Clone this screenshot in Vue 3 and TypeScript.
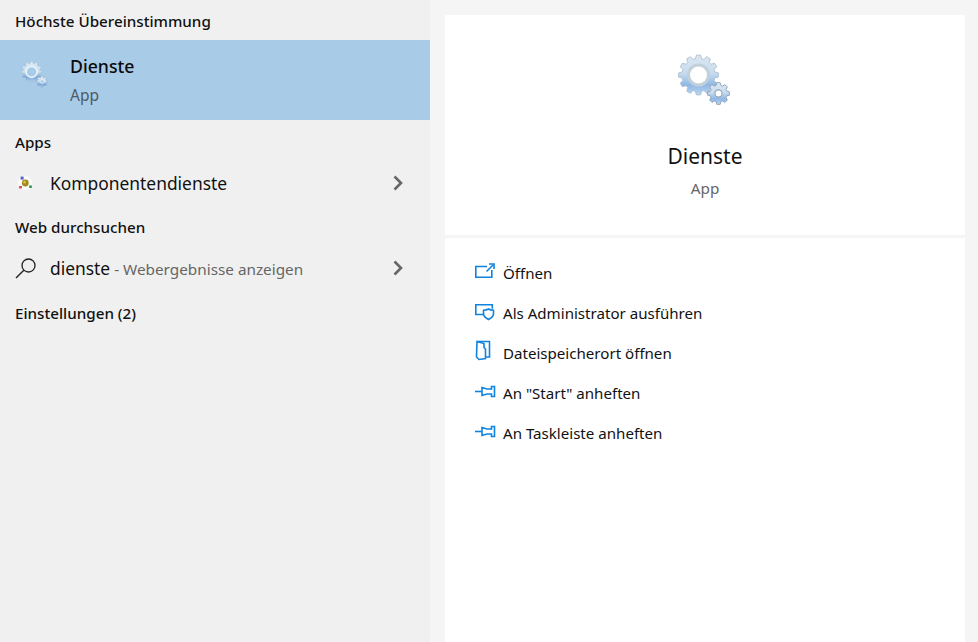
<script setup lang="ts">
function gearPath(cx: number, cy: number, outer: number, root: number, teeth: number): string {
  const pts: string[] = []
  const step = (Math.PI * 2) / teeth
  for (let i = 0; i < teeth; i++) {
    const a = i * step - Math.PI / 2
    const seq: [number, number][] = [
      [root, a - step * 0.36],
      [outer, a - step * 0.2],
      [outer, a + step * 0.2],
      [root, a + step * 0.36],
    ]
    for (const [r, t] of seq) {
      pts.push(`${(cx + r * Math.cos(t)).toFixed(2)} ${(cy + r * Math.sin(t)).toFixed(2)}`)
    }
  }
  return 'M' + pts.join('L') + 'Z'
}

const bigGear = gearPath(20.5, 21, 20, 16.5, 12)
const smallGear = gearPath(40.5, 39.5, 11, 8.5, 8)

const actions = [
  { label: 'Öffnen', icon: 'open' },
  { label: 'Als Administrator ausführen', icon: 'admin' },
  { label: 'Dateispeicherort öffnen', icon: 'folder' },
  { label: 'An "Start" anheften', icon: 'pin' },
  { label: 'An Taskleiste anheften', icon: 'pin' },
]
</script>

<template>
  <div class="page">
    <aside class="results">
      <h2 class="heading first">Höchste Übereinstimmung</h2>
      <div class="best">
        <svg class="best-icon" viewBox="0 0 54 52" width="28" height="27">
          <defs>
            <linearGradient id="g1" x1="0" y1="0" x2="0" y2="1">
              <stop offset="0" stop-color="#dfeaf3" />
              <stop offset="0.5" stop-color="#c9dfef" />
              <stop offset="0.75" stop-color="#7da7d8" />
              <stop offset="1" stop-color="#b4d2ec" />
            </linearGradient>
          </defs>
          <path :d="bigGear" fill="url(#g1)" stroke="#9db8cf" stroke-width="0.8" />
          <circle cx="20.5" cy="21" r="10.500" fill="#a8cbe8" stroke="#eef6fb" stroke-width="3" />
          <path :d="smallGear" fill="url(#g1)" stroke="#7f9fbd" stroke-width="0.8" />
          <circle cx="40.5" cy="39.500" r="3.600" fill="#a8cbe8" stroke="#e8f1f8" stroke-width="1.400" />
        </svg>
        <div class="best-text">
          <div class="best-name">Dienste</div>
          <div class="best-type">App</div>
        </div>
      </div>

      <h2 class="heading apps">Apps</h2>
      <div class="row comp">
        <svg class="row-icon" viewBox="0 0 16 16" width="16" height="16">
          <circle cx="8" cy="8" r="7" fill="#fafafa" />
          <circle cx="8.300" cy="8" r="3.400" fill="#a08a20" />
          <circle cx="7.600" cy="7.200" r="1.400" fill="#d8c240" />
          <rect x="3.600" y="1.600" width="3" height="3" fill="#5a5fc8" />
          <rect x="2" y="11" width="3" height="2.400" fill="#d8545c" />
          <rect x="12.200" y="10.400" width="2.600" height="2.600" fill="#2e9a44" />
        </svg>
        <span class="row-label">Komponentendienste</span>
        <svg class="chev" viewBox="0 0 12 16" width="12" height="16">
          <path d="M2.500 1.500 9 8l-6.500 6.500" fill="none" stroke="#666" stroke-width="2.600" />
        </svg>
      </div>

      <h2 class="heading web">Web durchsuchen</h2>
      <div class="row search">
        <svg class="row-icon" viewBox="0 0 22 22" width="22" height="22">
          <circle cx="13.500" cy="8.500" r="6.500" fill="none" stroke="#222" stroke-width="1.300" />
          <path d="M8.800 13.200 1 21" fill="none" stroke="#222" stroke-width="1.400" />
        </svg>
        <span class="row-label">dienste<span class="hint"> - Webergebnisse anzeigen</span></span>
        <svg class="chev" viewBox="0 0 12 16" width="12" height="16">
          <path d="M2.500 1.500 9 8l-6.500 6.500" fill="none" stroke="#666" stroke-width="2.600" />
        </svg>
      </div>

      <h2 class="heading settings">Einstellungen (2)</h2>
    </aside>

    <main class="detail">
      <section class="card hero">
        <svg class="hero-icon" viewBox="0 0 54 52" width="54" height="52">
          <defs>
            <linearGradient id="g2" x1="0" y1="0" x2="0" y2="1">
              <stop offset="0" stop-color="#dbe7f2" />
              <stop offset="0.45" stop-color="#c9dcee" />
              <stop offset="0.75" stop-color="#8fb7e6" />
              <stop offset="1" stop-color="#bcd8f2" />
            </linearGradient>
          </defs>
          <path :d="bigGear" fill="url(#g2)" stroke="#a4bacd" stroke-width="0.8" />
          <circle cx="20.500" cy="21" r="10" fill="#fff" stroke="#c2d0da" stroke-width="3" />
          <path :d="smallGear" fill="url(#g2)" stroke="#8298ad" stroke-width="0.8" />
          <circle cx="40.500" cy="39.500" r="3.600" fill="#fff" stroke="#8fa5b8" stroke-width="1.200" />
        </svg>
        <div class="hero-name">Dienste</div>
        <div class="hero-type">App</div>
      </section>

      <section class="card actions">
        <div v-for="a in actions" :key="a.label" class="action">
          <svg class="action-icon" viewBox="0 0 22 22" width="22" height="22">
            <g fill="none" stroke="#0f83e0" stroke-width="1.600">
              <template v-if="a.icon === 'open'">
                <path d="M13 6.500H1.800v10.700h16V10" />
                <path d="M12.500 11.500 19 5" />
                <path d="M15 4h5v5" />
              </template>
              <template v-else-if="a.icon === 'admin'">
                <path d="M9.500 14.500H1.800V4.800h16.500v4" />
                <path d="M14.500 9c1.400 1 3 1.300 5 1.300v3.200c0 2.800-2 4.500-5 6-3-1.500-5-3.200-5-6v-3.200c2 0 3.600-.300 5-1.300Z" />
              </template>
              <template v-else-if="a.icon === 'folder'">
                <path d="M3 1.500h12.500v15.500h-4" />
                <path d="M3 1.500 2.500 17l2.500 2.500 6.500-1V9l-1.500-1.500V3.500L3 1.500Z" />
              </template>
              <template v-else>
                <path d="M1 11.500h7" />
                <path d="M8 7.500l5 1.500h4.500V6.500h3v10h-3V14H13l-5 1.500Z" />
              </template>
            </g>
          </svg>
          <span class="action-label">{{ a.label }}</span>
        </div>
      </section>
    </main>
  </div>
</template>

<style>
html, body { margin: 0; background: #f0f0f0; }
</style>

<style scoped>
.page {
  display: flex;
  width: 978px;
  height: 642px;
  overflow: hidden;
  font-family: "Noto Sans", "Open Sans", sans-serif;
  color: #111;
}
.results {
  width: 430px;
  flex: none;
  background: #f0f0f0;
}
.heading {
  margin: 0;
  padding-left: 15px;
  font-size: 15.200px;
  line-height: 20px;
  font-weight: 500;
  color: #111;
}
.heading.first { padding-top: 11px; padding-bottom: 9px; }
.heading.apps { padding-top: 12px; }
.heading.web { padding-top: 14px; }
.heading.settings { padding-top: 15px; }
.best {
  display: flex;
  height: 80px;
  background: #a8cbe8;
}
.best-icon { margin: 21px 0 0 21px; flex: none; }
.best-text { margin-left: 21px; }
.best-name {
  margin-top: 14px;
  font-size: 17.700px;
  line-height: 24px;
  font-weight: 500;
  color: #0a0a0a;
}
.best-type {
  margin-top: 7px;
  font-size: 15.500px;
  line-height: 20px;
  color: #4c5a66;
}
.row {
  display: flex;
  align-items: center;
  height: 40px;
  padding-right: 26px;
}
.comp { margin-top: 11px; }
.search { margin-top: 11px; }
.comp .row-icon { margin-left: 17px; margin-right: 17px; }
.search .row-icon { margin-left: 15px; margin-right: 13px; }
.row-icon { flex: none; }
.row-label {
  flex: 1;
  font-size: 17.400px;
  line-height: 24px;
  color: #111;
}
.hint { font-size: 15.300px; color: #666; }
.chev { flex: none; }
.detail {
  flex: 1;
  display: flex;
  flex-direction: column;
  gap: 3px;
  padding: 15px 13px 0 15px;
  background: #f5f5f5;
}
.card { background: #fff; }
.hero {
  height: 220px;
  display: flex;
  flex-direction: column;
  align-items: center;
}
.hero-icon { margin-top: 39px; margin-left: 0; filter: blur(0.4px); }
.hero-name {
  margin-top: 36px;
  font-size: 21px;
  line-height: 28px;
  color: #111;
}
.hero-type {
  margin-top: 8px;
  font-size: 15.300px;
  line-height: 20px;
  color: #666;
}
.actions {
  flex: 1;
  padding-top: 15px;
}
.action {
  display: flex;
  align-items: center;
  height: 40px;
  padding-left: 29px;
}
.action-icon { flex: none; margin-right: 7px; margin-top: -4px; }
.action-label { font-size: 15.100px; line-height: 20px; color: #111; }
</style>
